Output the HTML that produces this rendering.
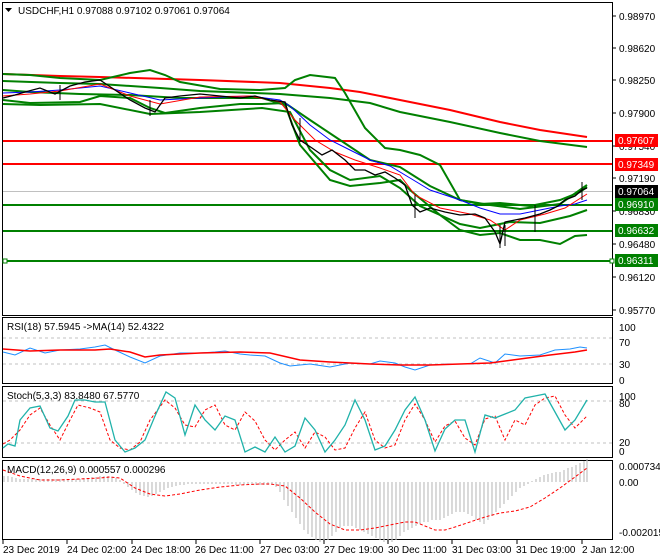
<!DOCTYPE html>
<html><head><meta charset="utf-8"><style>
body{margin:0;background:#fff;width:660px;height:560px;overflow:hidden;font-family:"Liberation Sans",sans-serif}
svg{display:block}
text{font-family:"Liberation Sans",sans-serif;font-size:10px;fill:#000}
</style></head><body>
<svg width="660" height="560" viewBox="0 0 660 560">
<rect width="660" height="560" fill="#fff"/>
<!-- panel frames -->
<g fill="none" stroke="#000" stroke-width="1">
<rect x="2.5" y="2.5" width="610" height="313"/>
<rect x="2.5" y="317.5" width="610" height="66"/>
<rect x="2.5" y="386.5" width="610" height="71"/>
<rect x="2.5" y="460.5" width="610" height="79"/>
</g>
<!-- right axis ticks -->
<g stroke="#000">
<line x1="612" y1="16" x2="616" y2="16"/><line x1="612" y1="48" x2="616" y2="48"/><line x1="612" y1="80" x2="616" y2="80"/><line x1="612" y1="113" x2="616" y2="113"/><line x1="612" y1="146" x2="616" y2="146"/><line x1="612" y1="178" x2="616" y2="178"/><line x1="612" y1="211" x2="616" y2="211"/><line x1="612" y1="244" x2="616" y2="244"/><line x1="612" y1="277" x2="616" y2="277"/><line x1="612" y1="310" x2="616" y2="310"/>
</g>
<g>
<text x="619" y="20">0.98970</text>
<text x="619" y="52">0.98620</text>
<text x="619" y="84">0.98250</text>
<text x="619" y="117">0.97900</text>
<text x="619" y="150">0.97540</text>
<text x="619" y="182">0.97190</text>
<text x="619" y="215">0.96830</text>
<text x="619" y="248">0.96480</text>
<text x="619" y="281">0.96120</text>
<text x="619" y="314">0.95770</text>
</g>
<!-- horizontal levels -->
<line x1="3" y1="191.5" x2="612" y2="191.5" stroke="#c0c0c0"/>
<g stroke-width="2">
<line x1="3" y1="141" x2="612" y2="141" stroke="#f00"/>
<line x1="3" y1="164" x2="612" y2="164" stroke="#f00"/>
<line x1="3" y1="205" x2="612" y2="205" stroke="#008000"/>
<line x1="3" y1="231" x2="612" y2="231" stroke="#008000"/>
<line x1="3" y1="261" x2="612" y2="261" stroke="#008000"/>
</g>
<rect x="3" y="259" width="4" height="4" fill="#fff" stroke="#008000"/>
<rect x="610" y="259" width="4" height="4" fill="#fff" stroke="#008000"/>
<!-- price labels -->
<rect x="615" y="134" width="43" height="13" fill="#f00"/><text x="618" y="144" style="fill:#fff">0.97607</text>
<rect x="615" y="158" width="43" height="13" fill="#f00"/><text x="618" y="168" style="fill:#fff">0.97349</text>
<rect x="615" y="185" width="43" height="13" fill="#000"/><text x="618" y="195" style="fill:#fff">0.97064</text>
<rect x="615" y="198" width="43" height="13" fill="#008000"/><text x="618" y="208" style="fill:#fff">0.96910</text>
<rect x="615" y="224" width="43" height="13" fill="#008000"/><text x="618" y="234" style="fill:#fff">0.96632</text>
<rect x="615" y="254" width="43" height="13" fill="#008000"/><text x="618" y="264" style="fill:#fff">0.96311</text>
<!-- long MAs -->
<polyline fill="none" stroke="#f00" stroke-width="2" points="3,74 60,76 100,77 200,80 280,83 330,88 360,92 400,100 450,110 500,122 540,130 587,137"/>
<polyline fill="none" stroke="#008000" stroke-width="2" points="3,81 60,83 100,84 160,88 200,91 280,94 330,98 370,103 400,112 450,122 500,133 540,141 587,147"/>
<!-- wide bands -->
<g fill="none" stroke="#008000" stroke-width="2">
<polyline points="3,74 30,75 60,78 100,80 130,73 150,70 165,75 180,82 220,89 260,90 285,88 295,80 310,75 335,78 345,93 365,128 385,148 400,150 420,155 440,165 460,200 480,204 500,203 530,206 560,200 580,192 587,187"/>
<polyline points="3,90 30,92 80,94 130,95 180,98 240,98 262,98 285,105 300,145 330,180 350,186 380,183 400,180 410,190 440,215 460,230 480,235 500,233 520,240 540,240 560,244 575,236 587,235"/>
<polyline points="3,100 30,103 80,102 100,96 130,98 150,108 165,113 200,108 240,104 262,104 285,103 310,120 340,140 370,160 400,167 430,186 460,200 490,205 520,209 560,204 587,185"/>
<polyline points="3,104 40,105 100,104 150,114 200,112 262,108 290,112 310,150 330,170 350,180 380,176 400,188 420,206 440,215 460,224 480,228 510,222 540,223 570,216 587,210"/>
</g>
<!-- fast MAs -->
<polyline fill="none" stroke="#00f" stroke-width="1" points="3,93 30,92 60,90 100,86 130,93 160,100 200,98 250,96 280,100 290,106 310,125 330,140 350,150 370,160 390,166 410,178 430,190 460,200 480,208 500,214 520,214 540,210 560,206 575,204 587,200"/>
<polyline fill="none" stroke="#f00" stroke-width="1" points="3,96 30,94 60,91 100,84 130,96 160,104 200,97 250,96 280,102 295,120 315,140 335,152 355,160 380,168 400,175 415,195 440,208 470,214 490,220 505,230 520,220 545,214 565,208 587,194"/>
<!-- price -->
<polyline fill="none" stroke="#000" stroke-width="1.3" points="3,98 15,95 25,92 40,88 55,94 70,86 85,82 100,80 115,90 130,100 145,108 155,112 165,98 180,96 200,94 220,96 240,98 255,96 270,100 285,102 292,125 300,140 312,148 322,155 332,150 345,160 355,170 365,170 375,175 385,172 395,178 405,185 412,205 420,212 430,208 445,212 460,215 475,214 485,218 495,232 500,244 505,222 515,220 525,218 540,214 550,210 558,206 565,200 575,196 582,190 587,188"/>
<g stroke="#000" stroke-width="1">
<line x1="500" y1="225" x2="500" y2="248"/><line x1="505" y1="225" x2="505" y2="246"/><line x1="535" y1="205" x2="535" y2="232"/><line x1="582" y1="182" x2="582" y2="200"/><line x1="415" y1="195" x2="415" y2="218"/><line x1="300" y1="118" x2="300" y2="142"/><line x1="60" y1="85" x2="60" y2="100"/><line x1="150" y1="100" x2="150" y2="116"/>
</g>
<!-- header -->
<path d="M5 8 L12 8 L8.5 12 Z" fill="#000"/>
<text x="18" y="14">USDCHF,H1  0.97088 0.97102 0.97061 0.97064</text>

<!-- RSI -->
<g stroke="#c0c0c0" stroke-dasharray="3,3"><line x1="3" y1="338" x2="612" y2="338"/><line x1="3" y1="364" x2="612" y2="364"/></g>
<polyline fill="none" stroke="#1e90ff" points="3,352 15,355 30,348 45,353 60,350 80,349 95,347 105,345 115,350 130,357 145,363 160,356 180,353 200,353 215,352 225,351 240,354 250,355 265,356 280,363 290,366 310,364 330,367 350,363 370,364 380,361 395,363 405,367 415,370 430,365 450,364 470,364 480,358 495,363 505,354 520,356 540,355 555,350 570,349 580,347 587,348"/>
<polyline fill="none" stroke="#f00" stroke-width="1.5" points="3,349 30,351 60,350 95,350 110,349 130,352 145,357 160,355 200,353 240,352 270,353 300,360 330,362 370,364 400,365 430,365 460,364 490,363 520,359 550,355 575,352 587,350"/>
<text x="7" y="330">RSI(18) 57.5945  -&gt;MA(14) 52.4322</text>
<text x="619" y="331">100</text><text x="619" y="346">70</text><text x="619" y="368">30</text><text x="619" y="384">0</text>

<!-- Stoch -->
<g stroke="#c0c0c0" stroke-dasharray="3,3"><line x1="3" y1="401" x2="612" y2="401"/><line x1="3" y1="443" x2="612" y2="443"/></g>
<polyline fill="none" stroke="#f00" stroke-dasharray="3,2" points="3,444 10,440 20,430 30,415 40,408 50,425 60,440 70,420 78,405 90,408 100,412 110,440 120,448 130,450 140,442 150,420 165,400 175,408 185,425 195,427 205,410 215,405 225,425 235,430 245,412 255,421 265,440 275,450 285,440 295,432 305,448 315,432 325,437 335,450 345,448 355,428 365,412 375,440 385,448 395,445 405,420 415,404 425,420 435,442 445,426 455,421 465,438 475,445 485,419 495,416 505,440 515,420 525,425 535,405 545,398 555,396 565,415 575,428 587,416"/>
<polyline fill="none" stroke="#20b2aa" stroke-width="1.3" points="3,448 8,444 15,446 20,420 30,408 40,406 50,428 58,431 68,416 75,400 85,400 95,402 105,402 115,440 125,452 135,448 145,440 155,416 166,392 175,398 185,435 195,405 205,420 215,430 225,416 235,420 245,452 255,447 265,452 275,437 285,452 295,446 305,418 315,430 325,452 335,440 345,425 355,400 365,420 375,450 385,446 395,430 405,410 415,397 425,420 435,451 445,429 455,420 465,420 475,452 485,415 495,418 505,414 515,410 525,398 535,396 545,394 555,412 565,430 575,420 587,400"/>
<text x="7" y="399">Stoch(5,3,3) 83.8480 67.5770</text>
<text x="619" y="400">100</text><text x="619" y="407">80</text><text x="619" y="446">20</text><text x="619" y="455">0</text>

<!-- MACD -->
<g stroke="#c0c0c0" stroke-width="1.2">
<path d="M4 482v-6M8 482v-6M12 482v-5M16 482v-4M20 482v-3M24 482v-3M28 482v-3M32 482v-3M36 482v-3M40 482v-3M44 482v-3M48 482v-3M52 482v-3M56 482v-3M60 482v-3M64 482v-3M68 482v-3M72 482v-3M76 482v-3M80 482v-3M84 482v-4M88 482v-4M92 482v-5M96 482v-5M100 482v-6M104 482v-6M108 482v-6M112 482v-5M116 482v-4M120 482v-2M124 482v2M128 482v5M132 482v8M136 482v11M140 482v13M144 482v14M148 482v15M152 482v14M156 482v12M160 482v10M164 482v8M168 482v6M172 482v5M176 482v4M180 482v3M184 482v3M188 482v2M192 482v2M196 482v2M200 482v2M204 482v2M208 482v2M212 482v2M216 482v2M220 482v2M224 482v2M228 482v2M232 482v2M236 482v3M240 482v3M244 482v3M248 482v3M252 482v3M256 482v3M260 482v3M264 482v3M268 482v3M272 482v3M276 482v5M280 482v10M284 482v18M288 482v24M292 482v30M296 482v36M300 482v42M304 482v48M308 482v52M312 482v55M316 482v58M320 482v60M324 482v60M328 482v58M332 482v54M336 482v50M340 482v46M344 482v44M348 482v44M352 482v44M356 482v46M360 482v48M364 482v50M368 482v52M372 482v54M376 482v56M380 482v58M384 482v60M388 482v60M392 482v60M396 482v58M400 482v54M404 482v50M408 482v48M412 482v46M416 482v44M420 482v42M424 482v40M428 482v40M432 482v38M436 482v38M440 482v38M444 482v36M448 482v34M452 482v32M456 482v30M460 482v30M464 482v30M468 482v32M472 482v34M476 482v38M480 482v40M484 482v42M488 482v38M492 482v34M496 482v30M500 482v26M504 482v22M508 482v18M512 482v14M516 482v10M520 482v6M524 482v4M528 482v2M532 482v-1M536 482v-3M540 482v-5M544 482v-7M548 482v-8M552 482v-9M556 482v-10M560 482v-10M564 482v-12M568 482v-14M572 482v-15M576 482v-17M580 482v-19M584 482v-21M587 482v-23"/>
</g>
<polyline fill="none" stroke="#f00" stroke-dasharray="3,2" points="3,470 20,476 40,480 60,480 80,479 100,478 110,477 120,478 135,488 150,494 165,496 180,494 200,490 220,487 240,485 260,484 270,484 285,486 300,498 315,512 330,524 345,530 360,530 375,528 390,525 405,522 415,522 425,526 435,530 445,530 455,527 470,522 485,517 500,513 515,511 530,507 545,498 560,488 575,477 587,468"/>
<text x="7" y="473">MACD(12,26,9) 0.000557 0.000296</text>
<text x="619" y="470">0.000734</text><text x="619" y="486">0.00</text><text x="619" y="536">-0.002015</text>

<!-- time axis -->
<g stroke="#000"><line x1="3" y1="540" x2="3" y2="544"/><line x1="67" y1="540" x2="67" y2="544"/><line x1="132" y1="540" x2="132" y2="544"/><line x1="196" y1="540" x2="196" y2="544"/><line x1="260" y1="540" x2="260" y2="544"/><line x1="324" y1="540" x2="324" y2="544"/><line x1="388" y1="540" x2="388" y2="544"/><line x1="452" y1="540" x2="452" y2="544"/><line x1="517" y1="540" x2="517" y2="544"/><line x1="582" y1="540" x2="582" y2="544"/></g>
<g>
<text x="3" y="553">23 Dec 2019</text><text x="67" y="553">24 Dec 02:00</text><text x="131" y="553">24 Dec 18:00</text><text x="195" y="553">26 Dec 11:00</text><text x="260" y="553">27 Dec 03:00</text><text x="324" y="553">27 Dec 19:00</text><text x="388" y="553">30 Dec 11:00</text><text x="452" y="553">31 Dec 03:00</text><text x="516" y="553">31 Dec 19:00</text><text x="582" y="553">2 Jan 12:00</text>
</g>
</svg>
</body></html>
